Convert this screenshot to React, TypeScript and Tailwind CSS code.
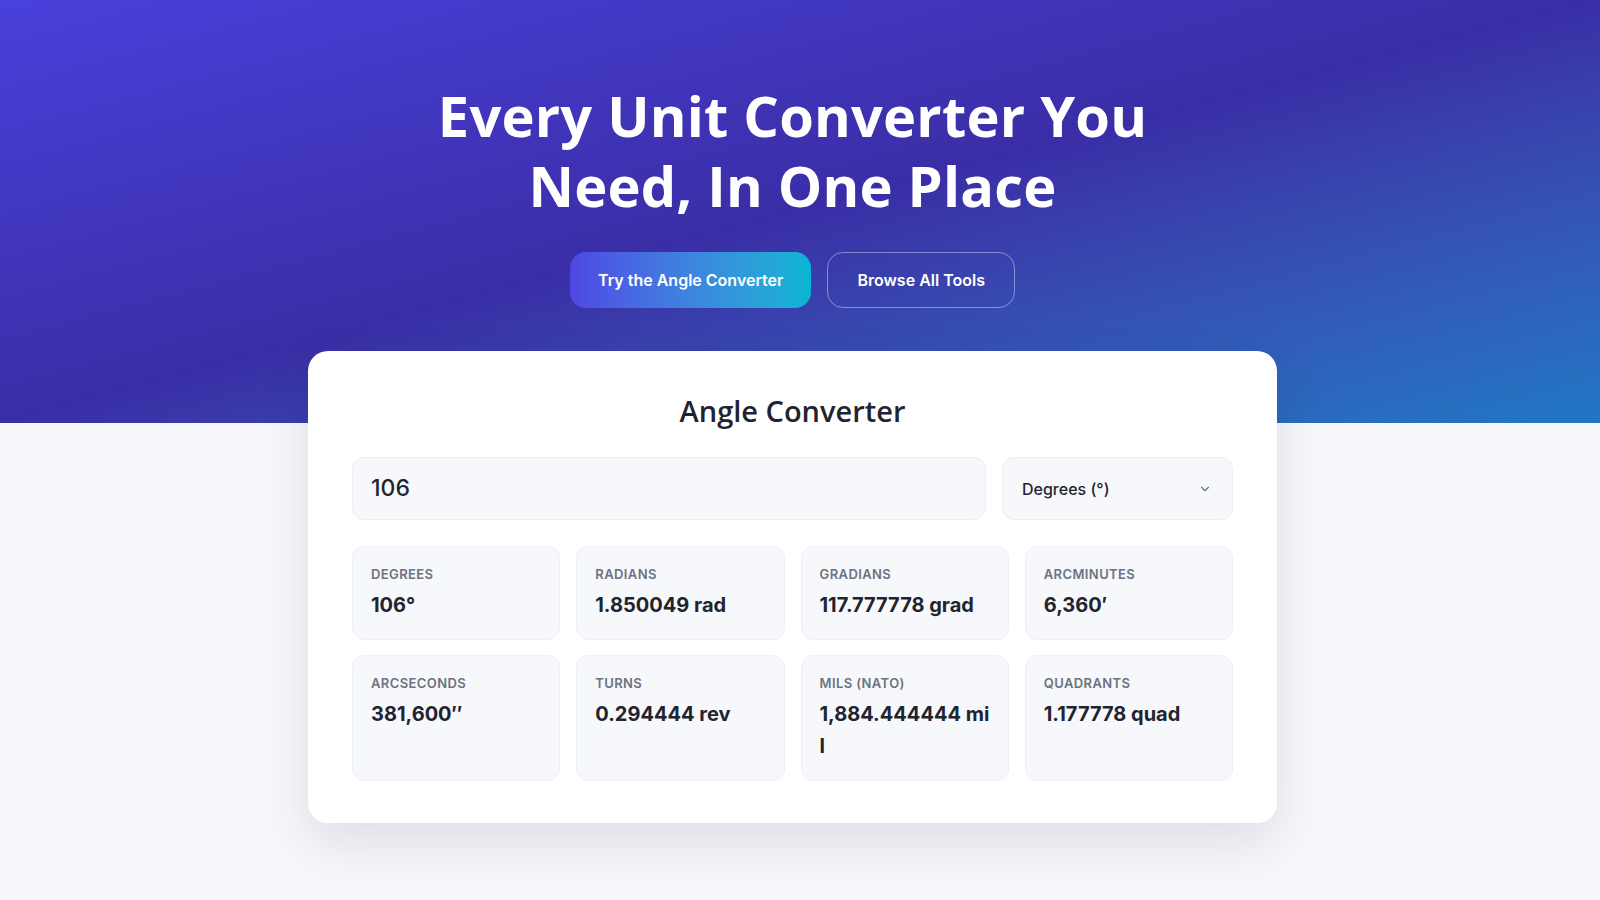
import { ChevronDown } from "lucide-react";

const results = [
  { label: "Degrees", value: "106°" },
  { label: "Radians", value: "1.850049 rad" },
  { label: "Gradians", value: "117.777778 grad" },
  { label: "Arcminutes", value: "6,360′" },
  { label: "Arcseconds", value: "381,600″" },
  { label: "Turns", value: "0.294444 rev" },
  { label: "Mils (NATO)", value: "1,884.444444 mil" },
  { label: "Quadrants", value: "1.177778 quad" },
];

const heading = { fontFamily: '"Open Sans", "Noto Sans", sans-serif' };

export default function App() {
  return (
    <main
      className="min-h-screen bg-[#f6f7fb] text-[#1f2937]"
      style={{ fontFamily: 'Inter, "Noto Sans", sans-serif' }}
    >
      {/* hero */}
      <section className="bg-linear-to-br from-[#4a40dc] via-[#3a2ea6] to-[#1f78c4] pt-20 pb-[115px] pr-[15px]">
        <h1
          className="text-center text-[56px] font-bold leading-[70px] tracking-[0.2px] text-white"
          style={heading}
        >
          Every Unit Converter You
          <br />
          Need, In One Place
        </h1>

        <div className="mt-8 flex justify-center gap-4">
          <button className="rounded-2xl bg-linear-to-r from-[#4f46e5] to-[#06b6d4] px-7 py-4 text-base font-semibold leading-6 text-white">
            Try the Angle Converter
          </button>
          <button className="rounded-2xl border border-white/40 px-[29px] py-[15px] text-base font-semibold leading-6 text-white">
            Browse All Tools
          </button>
        </div>
      </section>

      {/* converter card */}
      <div className="pr-[15px] pb-16">
        <div className="mx-auto -mt-[72px] w-[969px] rounded-[20px] bg-white px-11 pt-11 pb-[42px] shadow-[0_20px_50px_rgba(15,23,42,0.10)]">
          <h2
            className="mb-[30px] text-center text-[29px] font-semibold leading-8 text-[#1f2430]"
            style={heading}
          >
            Angle Converter
          </h2>

          <div className="flex gap-4">
            <div className="flex h-[63px] flex-1 items-center rounded-xl border border-[#eceef3] bg-[#f7f8fb] px-[18px] text-[23px] font-medium text-[#1f2430]">
              106
            </div>
            <div className="flex h-[63px] w-[231px] items-center justify-between rounded-xl border border-[#eceef3] bg-[#f7f8fb] pl-[19px] pr-5 text-base font-medium text-[#1f2430]">
              <span>Degrees (°)</span>
              <ChevronDown size={14} strokeWidth={2} className="text-[#6b7280]" />
            </div>
          </div>

          <div className="mt-[26px] grid grid-cols-4 gap-x-4 gap-y-[15px]">
            {results.map((r) => (
              <div
                key={r.label}
                className="rounded-xl border border-[#edf0f4] bg-[#f7f8fb] px-[18px] py-[18px]"
              >
                <div className="text-[13px] font-semibold uppercase leading-[18px] tracking-[0.4px] text-[#6b7280]">
                  {r.label}
                </div>
                <div className="mt-[6px] break-all text-[20px] font-bold leading-8 text-[#1f2430]">
                  {r.value}
                </div>
              </div>
            ))}
          </div>
        </div>
      </div>
    </main>
  );
}
